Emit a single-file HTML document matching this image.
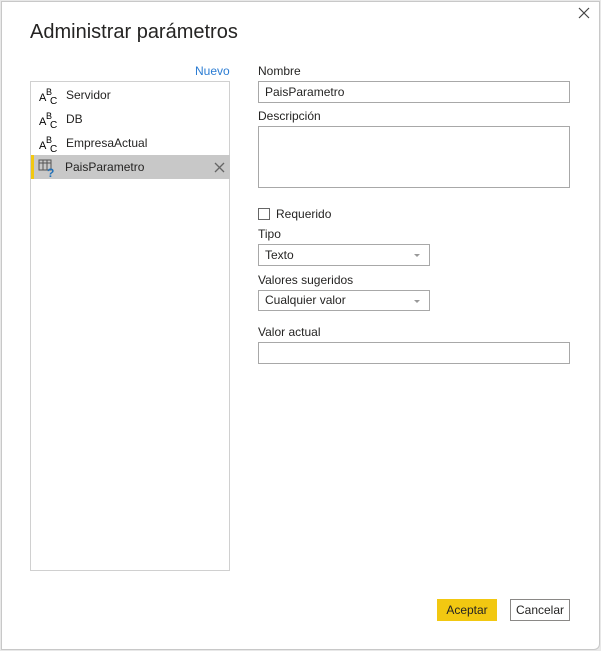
<!DOCTYPE html>
<html><head><meta charset="utf-8"><style>
body{margin:0;width:601px;height:651px;background:#e8e8e8;position:relative;overflow:hidden;font-family:"Segoe UI","Liberation Sans",sans-serif;font-size:12px;color:#252423}
.dlg{position:absolute;left:1px;top:1px;width:597px;height:647px;background:#fff;border:1px solid #c8c8c8;border-radius:0 0 6px 0}
.a{position:absolute}
h1{position:absolute;left:30px;top:21px;margin:0;font-size:20px;font-weight:normal;color:#252423}
.inp{position:absolute;border:1px solid #a8a8a8;background:#fff;box-sizing:border-box;padding-left:6px;line-height:20px}
.arr{position:absolute;right:9px;top:9px;width:0;height:0;border-left:3px solid transparent;border-right:3px solid transparent;border-top:3px solid #999}
.row{position:absolute;left:1px;width:198px;height:24px;line-height:24px}
.ic{position:absolute;left:7px;top:0;font-size:11px}
.lbl{position:absolute;left:34px}
</style></head><body>
<div class="dlg"></div>
<svg class="a" style="left:578px;top:7px" width="12" height="12"><path d="M1 1L11 11M11 1L1 11" stroke="#444" stroke-width="1.2"/></svg>
<h1>Administrar parámetros</h1>
<div class="a" style="left:195px;top:64px;color:#2b7cd3">Nuevo</div>
<div class="a" style="left:30px;top:81px;width:200px;height:490px;border:1px solid #d0d0d0;box-sizing:border-box">
 <div class="row" style="top:1px"><svg class="ic" width="20" height="20" style="top:3px"><text x="0" y="15" font-size="11" font-family="Liberation Sans">A</text><text x="7" y="9" font-size="9" font-family="Liberation Sans">B</text><text x="11" y="18" font-size="10" font-family="Liberation Sans">C</text></svg><span class="lbl">Servidor</span></div>
 <div class="row" style="top:25px"><svg class="ic" width="20" height="20" style="top:3px"><text x="0" y="15" font-size="11" font-family="Liberation Sans">A</text><text x="7" y="9" font-size="9" font-family="Liberation Sans">B</text><text x="11" y="18" font-size="10" font-family="Liberation Sans">C</text></svg><span class="lbl">DB</span></div>
 <div class="row" style="top:49px"><svg class="ic" width="20" height="20" style="top:3px"><text x="0" y="15" font-size="11" font-family="Liberation Sans">A</text><text x="7" y="9" font-size="9" font-family="Liberation Sans">B</text><text x="11" y="18" font-size="10" font-family="Liberation Sans">C</text></svg><span class="lbl">EmpresaActual</span></div>
 <div class="row" style="top:73px;left:0;width:199px;background:#c8c8c8;border-left:3px solid #f2c811;box-sizing:border-box"><svg class="ic" width="20" height="20" style="top:3px;left:4px"><rect x="1" y="2" width="12" height="10" fill="none" stroke="#555"/><line x1="1" y1="5" x2="13" y2="5" stroke="#555"/><line x1="5" y1="2" x2="5" y2="12" stroke="#555"/><line x1="9" y1="2" x2="9" y2="12" stroke="#555"/><text x="9" y="19" font-size="12" font-weight="bold" fill="#1f6fb8" font-family="Liberation Sans">?</text></svg><span class="lbl" style="left:31px">PaisParametro</span><svg class="a" style="right:5px;top:7px" width="11" height="11"><path d="M1 1L10 10M10 1L1 10" stroke="#666" stroke-width="1.3"/></svg></div>
</div>
<div class="a" style="left:258px;top:64px">Nombre</div>
<div class="inp" style="left:258px;top:81px;width:312px;height:22px">PaisParametro</div>
<div class="a" style="left:258px;top:109px">Descripción</div>
<div class="inp" style="left:258px;top:126px;width:312px;height:62px"></div>
<div class="a" style="left:258px;top:208px;width:12px;height:12px;border:1px solid #666;box-sizing:border-box"></div>
<div class="a" style="left:276px;top:207px">Requerido</div>
<div class="a" style="left:258px;top:227px">Tipo</div>
<div class="inp" style="left:258px;top:244px;width:172px;height:22px">Texto<div class="arr"></div></div>
<div class="a" style="left:258px;top:273px">Valores sugeridos</div>
<div class="inp" style="left:258px;top:290px;width:172px;height:21px;line-height:19px">Cualquier valor<div class="arr"></div></div>
<div class="a" style="left:258px;top:325px">Valor actual</div>
<div class="inp" style="left:258px;top:342px;width:312px;height:22px"></div>
<div class="a" style="left:437px;top:599px;width:60px;height:22px;background:#f2c811;text-align:center;line-height:22px">Aceptar</div>
<div class="a" style="left:510px;top:599px;width:60px;height:22px;border:1px solid #8a8886;box-sizing:border-box;text-align:center;line-height:20px">Cancelar</div>
</body></html>
